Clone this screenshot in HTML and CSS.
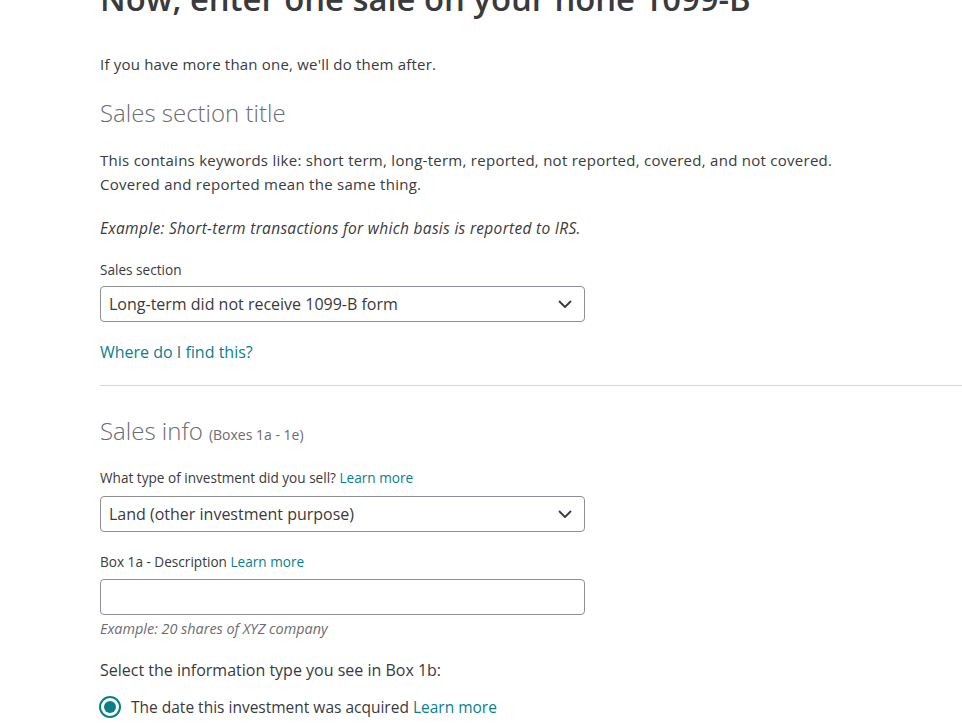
FILE: index.html
```html
<!DOCTYPE html>
<html lang="en">
<head>
<meta charset="utf-8">
<title>Enter one sale</title>
<link rel="stylesheet" href="styles.css">
</head>
<body>
<main class="page">
  <h1 class="title">Now, enter one sale on your none 1099-B</h1>
  <p class="intro">If you have more than one, we'll do them after.</p>

  <h2 class="section-title">Sales section title</h2>
  <p class="body-text">This contains keywords like: short term, long-term, reported, not reported, covered, and not covered.<br>Covered and reported mean the same thing.</p>
  <p class="body-text example">Example: Short-term transactions for which basis is reported to IRS.</p>

  <div class="field">
    <label class="label">Sales section</label>
    <div class="select">
      <span>Long-term did not receive 1099-B form</span>
      <svg class="chev" width="14" height="9" viewBox="0 0 14 9"><path d="M1.5 1.5 L7 7 L12.5 1.5" fill="none" stroke="#393a3d" stroke-width="1.8" stroke-linecap="round" stroke-linejoin="round"/></svg>
    </div>
  </div>
  <a class="link find" href="#">Where do I find this?</a>

  <hr class="divider">

  <h2 class="section-title info">Sales info <span class="sub">(Boxes 1a - 1e)</span></h2>

  <div class="field first-info">
    <label class="label">What type of investment did you sell? <a class="link" href="#">Learn more</a></label>
    <div class="select">
      <span>Land (other investment purpose)</span>
      <svg class="chev" width="14" height="9" viewBox="0 0 14 9"><path d="M1.5 1.5 L7 7 L12.5 1.5" fill="none" stroke="#393a3d" stroke-width="1.8" stroke-linecap="round" stroke-linejoin="round"/></svg>
    </div>
  </div>

  <div class="field desc">
    <label class="label">Box 1a - Description <a class="link" href="#">Learn more</a></label>
    <div class="input"></div>
    <p class="hint">Example: 20 shares of XYZ company</p>
  </div>

  <p class="question">Select the information type you see in Box 1b:</p>
  <div class="radio-row">
    <span class="radio"><span class="dot"></span></span>
    <span class="radio-text">The date this investment was acquired <a class="link" href="#">Learn more</a></span>
  </div>
</main>
</body>
</html>
```
FILE: styles.css
```css
html, body {
  margin: 0;
  padding: 0;
  background: #ffffff;
}
body {
  font-family: "Open Sans", Lato, sans-serif;
  color: #393a3d;
  overflow: hidden;
}
.page {
  padding-left: 100px;
  margin-top: -23px;
}
.title {
  margin: 0;
  font-size: 32.8px;
  line-height: 44px;
  font-weight: 600;
  color: #393a3d;
}
.intro {
  margin: 31px 0 0;
  font-size: 15px;
  letter-spacing: 0.2px;
  line-height: 24px;
}
.section-title {
  margin: 21px 0 0;
  font-size: 24px;
  line-height: 32px;
  font-weight: 300;
  color: #6b6c72;
}
.section-title.info {
  margin-top: 29px;
  font-size: 24px;
}
.section-title .sub {
  font-size: 14px;
  font-weight: 400;
}
.body-text {
  margin: 19px 0 0;
  font-size: 15px;
  letter-spacing: 0.27px;
  line-height: 24px;
}
.example {
  font-style: italic;
  margin-top: 20px;
  font-size: 15.5px;
  letter-spacing: 0.3px;
}
.field {
  margin-top: 20px;
  width: 485px;
}
.field.first-info {
  margin-top: 17px;
}
.label {
  display: block;
  font-size: 13.6px;
  line-height: 20px;
  margin-bottom: 6px;
}
.first-info .label {
  margin-bottom: 8px;
}
.desc .label {
  margin-bottom: 7px;
}
.select, .input {
  box-sizing: border-box;
  height: 36px;
  border: 1px solid #8d9096;
  border-radius: 4px;
  display: flex;
  align-items: center;
  justify-content: space-between;
  padding: 0 12px 0 8px;
  font-size: 16px;
}
.chev {
  display: block;
}
.link {
  color: #0a7f8c;
  text-decoration: none;
}
.find {
  display: inline-block;
  margin-top: 19px;
  font-size: 16px;
  line-height: 22px;
}
.divider {
  margin: 22px 0 0;
  border: 0;
  border-top: 1px solid #d4d7dc;
  height: 0;
}
.desc {
  margin-top: 20px;
}
.hint {
  margin: 4px 0 0;
  font-size: 14.4px;
  line-height: 20px;
  font-style: italic;
  color: #6b6c72;
}
.question {
  margin: 19px 0 0;
  font-size: 16px;
  line-height: 24px;
}
.radio-row {
  margin-top: 13px;
  display: flex;
  align-items: center;
  gap: 10px;
  font-size: 15.5px;
  line-height: 24px;
}
.radio {
  box-sizing: border-box;
  width: 22px;
  height: 22px;
  border: 2px solid #0a7f8c;
  border-radius: 50%;
  display: flex;
  align-items: center;
  justify-content: center;
  margin-left: -1px;
}
.dot {
  width: 12px;
  height: 12px;
  border-radius: 50%;
  background: #0a7f8c;
}
.radio-text {
  color: #393a3d;
}
```
